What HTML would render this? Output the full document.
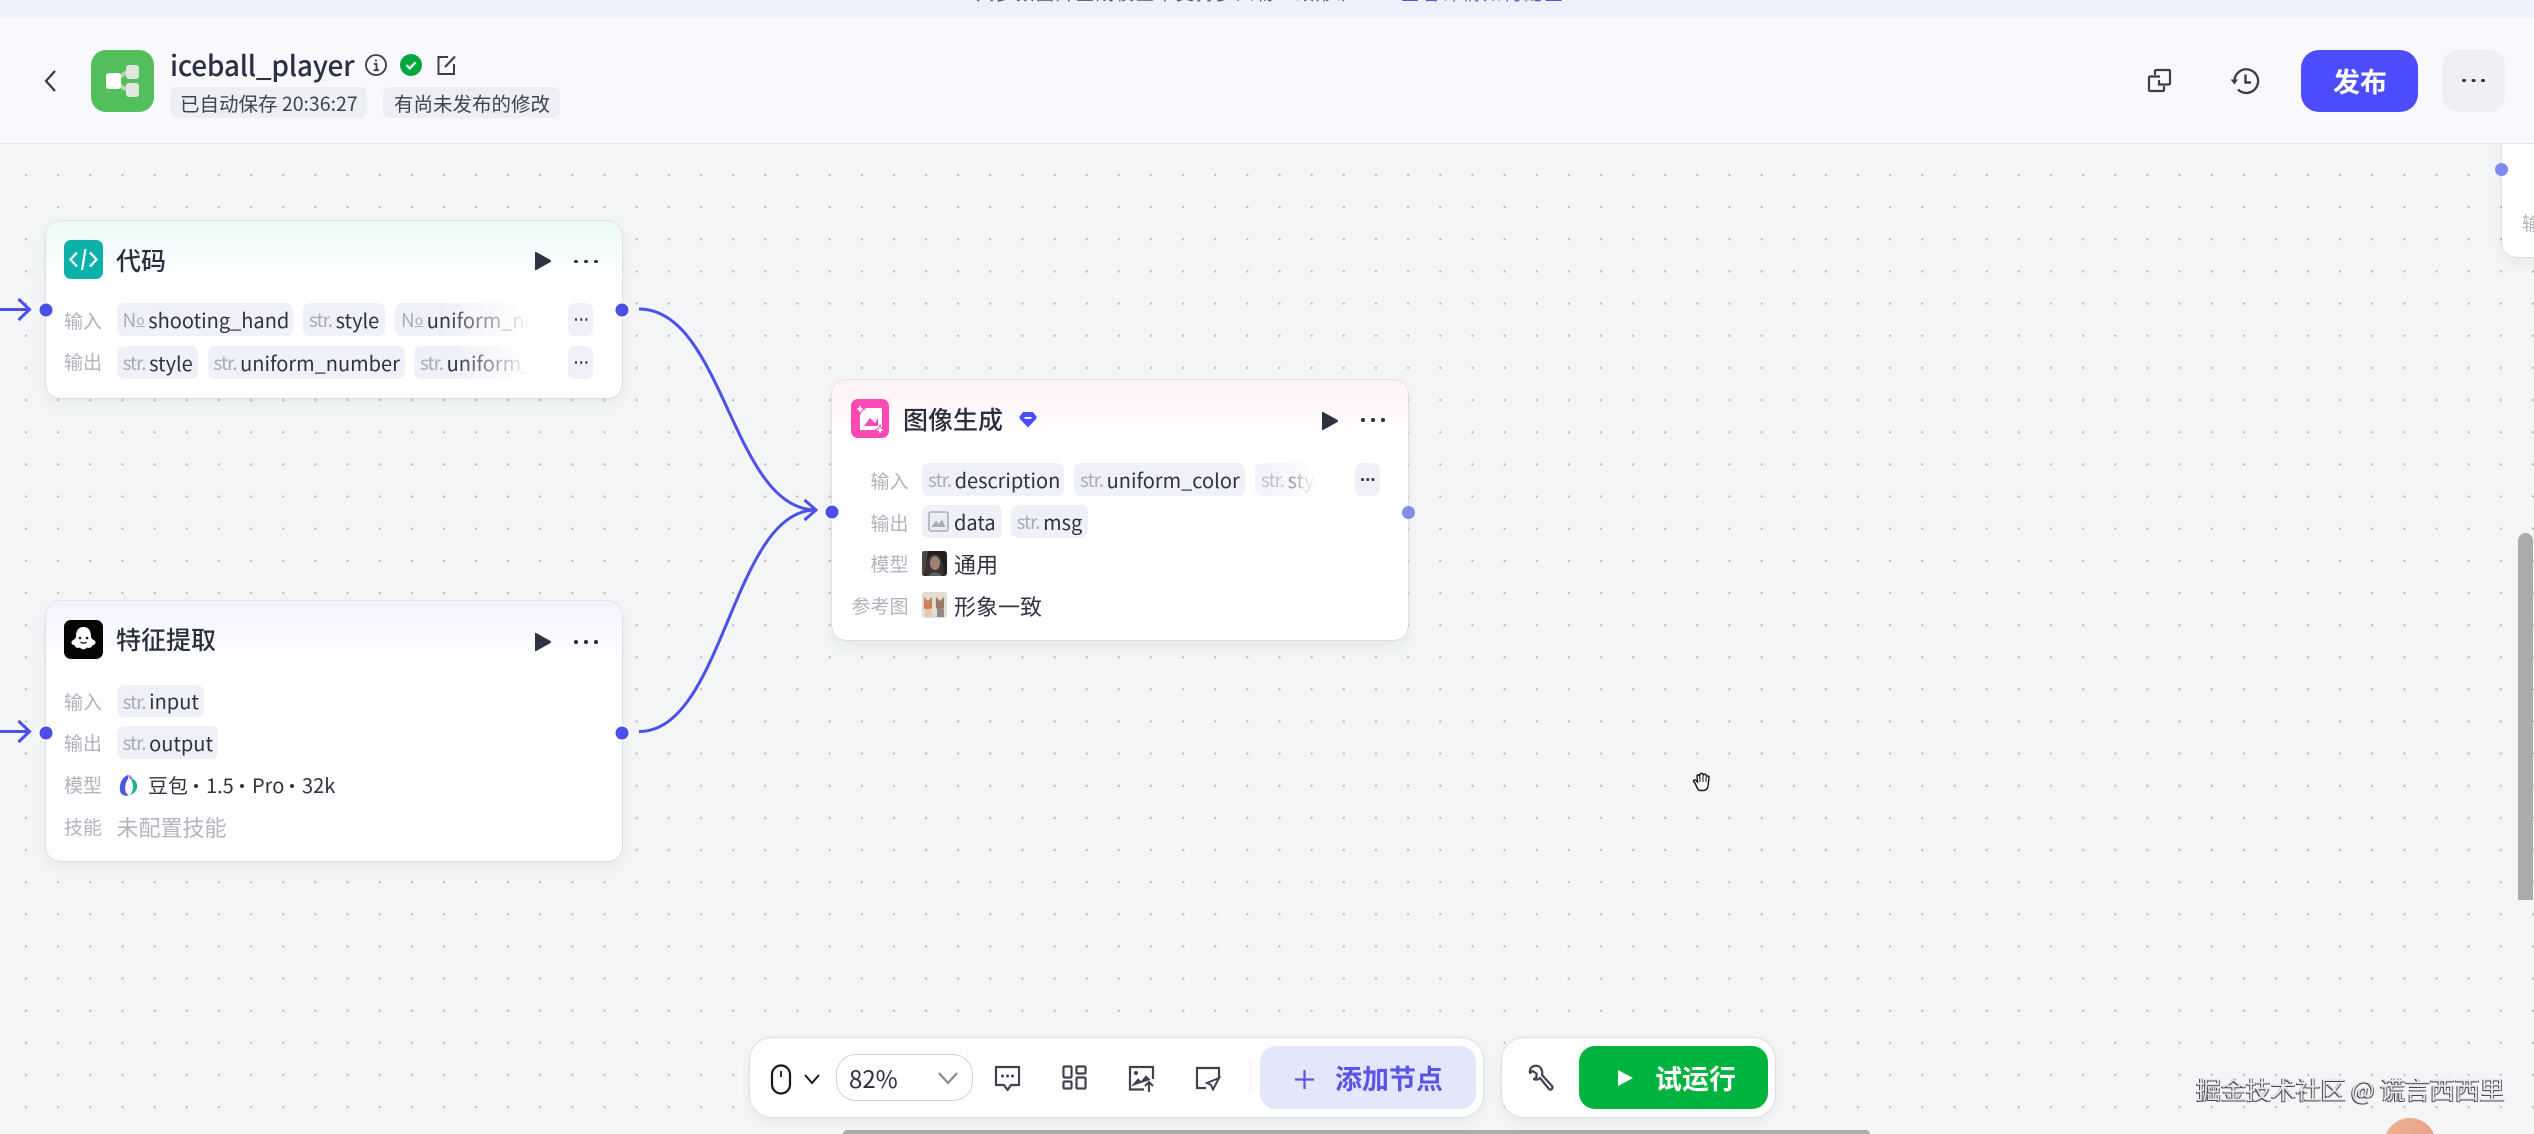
<!DOCTYPE html>
<html lang="zh"><head><meta charset="utf-8"><title>iceball_player</title>
<style>
*{box-sizing:border-box;margin:0;padding:0}
html,body{width:2534px;height:1134px;overflow:hidden;background:#f3f5f6}
body{position:relative;font-family:"Noto Sans CJK SC","Liberation Sans",sans-serif;color:#2b2e3c}
.a{position:absolute}
#bg{left:0;top:143px;width:2534px;height:991px;background-color:#f3f5f6;background-image:radial-gradient(circle at center,#b0b3ba 0,#b0b3ba .8px,transparent 1.3px);background-size:32.15px 32.15px;background-position:10px 16px}
#strip{left:0;top:0;width:2534px;height:18px;background:#eef0fd}
#head{left:0;top:18px;width:2534px;height:126px;background:#f9f9fd;border-bottom:1.5px solid #e2e3e8}
.t{position:absolute;white-space:nowrap;line-height:1}
.node{position:absolute;background:#fff;border-radius:14px;box-shadow:0 0 0 .5px rgba(190,193,204,.7),0 6px 14px rgba(40,45,70,.06);overflow:hidden}
.grad{position:absolute;left:0;top:0;width:100%;height:64px}
.lab{position:absolute;font-size:19px;line-height:1;color:#b0b3bd;white-space:nowrap}
.chip{position:absolute;height:33px;background:#f0f1f8;border-radius:7px;display:flex;align-items:center;padding-left:6px;font-size:20px;white-space:nowrap;overflow:hidden;color:#2f3240;line-height:1}
.chip i{font-style:normal;color:#a9acb9;font-size:19px;letter-spacing:-1px;margin-right:3.5px}
.chip i u{font-size:14px;text-decoration:underline;position:relative;top:-2px;letter-spacing:0;margin-left:1px}
.fade{-webkit-mask-image:linear-gradient(90deg,#000 35%,transparent 100%);mask-image:linear-gradient(90deg,#000 35%,transparent 100%)}
.more{position:absolute;height:33px;width:25px;background:#f0f1f8;border-radius:7px;font-size:0}
.more::before{content:"";position:absolute;left:6.5px;top:15px;width:2.6px;height:2.6px;border-radius:50%;background:#3a3d4a;box-shadow:5.2px 0 0 #3a3d4a,10.4px 0 0 #3a3d4a}
.port{position:absolute;width:13px;height:13px;border-radius:50%;background:#4c50e6;transform:translate(-6.5px,-6.5px);box-shadow:0 0 0 1.5px #fff}
.dots{position:absolute;width:3.6px;height:3.6px;border-radius:50%;background:#2f3240;box-shadow:10px 0 0 #2f3240,20px 0 0 #2f3240}
.md{position:absolute;width:4px;height:4px;border-radius:50%;background:#2f3240;top:784px}
.nt{position:absolute;white-space:nowrap;line-height:1;font-size:25px;color:#2b2e3c;font-weight:500}
</style></head><body>
<div id="bg" class="a"></div>

<!-- right partial node -->
<div class="node" style="left:2502px;top:120px;width:60px;height:137px;border-radius:0 0 0 14px">
<div class="lab" style="left:20px;top:93px">输</div></div>
<div class="a" style="left:2495px;top:163px;width:13px;height:13px;border-radius:50%;background:#8189ec"></div>

<div id="strip" class="a"></div>
<div class="t" style="left:976px;top:-16px;font-size:18px;width:368px;overflow:hidden;color:#55586a;letter-spacing:2px">大多数图片生成模型不支持多人物一致形象生成能力大多数图片</div>
<div class="t" style="left:1401px;top:-16px;font-size:18px;color:#5a55d8;letter-spacing:2.500px">查看详情如何配置</div>
<div id="head" class="a"></div>

<!-- header left -->
<svg class="a" style="left:40px;top:68px" width="22" height="26" viewBox="0 0 22 26"><path d="M15 3 L6 13 L15 23" fill="none" stroke="#33364a" stroke-width="2.2"/></svg>
<div class="a" style="left:91px;top:50px;width:63px;height:62px;border-radius:15px;background:#52bf5c"></div>
<svg class="a" style="left:91px;top:50px" width="63" height="62" viewBox="0 0 63 62"><path d="M28 27 L40 20 M28 35 L40 42" stroke="#b5d8b6" stroke-width="4"/><rect x="15" y="23" width="15" height="16" rx="3" fill="#fff"/><rect x="35" y="15" width="13" height="14" rx="3" fill="#dfe7df"/><rect x="35" y="33" width="13" height="14" rx="3" fill="#dfe7df"/></svg>
<div class="t" style="left:170px;top:51px;font-size:28px;letter-spacing:-.25px;color:#2c2f45;font-weight:500">iceball_player</div>
<svg class="a" style="left:364px;top:53px" width="24" height="24" viewBox="0 0 24 24"><circle cx="12" cy="12" r="10" fill="none" stroke="#3a3d4a" stroke-width="1.8"/><path d="M12 6.5v2M9.8 11H12.5V17M9.6 17.2H15" fill="none" stroke="#3a3d4a" stroke-width="1.8"/></svg>
<svg class="a" style="left:400px;top:54px" width="22" height="22" viewBox="0 0 22 22"><circle cx="11" cy="11" r="11" fill="#00a73e"/><path d="M6.5 11.2 L9.8 14.4 L15.5 8.4" fill="none" stroke="#fff" stroke-width="2.2"/></svg>
<svg class="a" style="left:436px;top:54px" width="22" height="22" viewBox="0 0 22 22"><path d="M12 3H2.5V20H18V10" fill="none" stroke="#3a3d4a" stroke-width="2"/><path d="M9 13 L19 2.5" fill="none" stroke="#3a3d4a" stroke-width="2"/></svg>
<div class="a" style="left:170px;top:87px;width:197px;height:31px;border-radius:7px;background:#eeeff5"></div>
<div class="t" style="left:180px;top:93px;font-size:19.5px;color:#3f4250">已自动保存 20:36:27</div>
<div class="a" style="left:383px;top:87px;width:177px;height:31px;border-radius:7px;background:#eeeff5"></div>
<div class="t" style="left:394px;top:93px;font-size:19.5px;color:#3f4250">有尚未发布的修改</div>

<!-- header right -->
<svg class="a" style="left:2147px;top:68px" width="25" height="25" viewBox="0 0 25 25"><path d="M8 7V3.5Q8 2 9.5 2H21.5Q23 2 23 3.5V15Q23 16.500 21.500 16.500H12V12" fill="none" stroke="#3a3d4a" stroke-width="2.2"/><path d="M17 18V21.5Q17 23 15.500 23H3.500Q2 23 2 21.500V10Q2 8.500 3.500 8.500H13" fill="none" stroke="#3a3d4a" stroke-width="2.2"/></svg>
<svg class="a" style="left:2230px;top:66px" width="30" height="30" viewBox="0 0 30 30"><path d="M4.500 15A11.800 11.800 0 1 1 8 23.500" fill="none" stroke="#3a3d4a" stroke-width="2.300"/><path d="M0.500 13.500H8L4.500 18.500Z" fill="#3a3d4a"/><path d="M15.500 8.500V16.500H21" fill="none" stroke="#3a3d4a" stroke-width="2.400"/></svg>
<div class="a" style="left:2301px;top:50px;width:117px;height:62px;border-radius:18px;background:#4d4dff"></div>
<div class="t" style="left:2333px;top:67px;font-size:27px;color:#fff;font-weight:700">发布</div>
<div class="a" style="left:2442px;top:50px;width:63px;height:62px;border-radius:16px;background:#eef0f5"></div>
<div class="dots" style="left:2462px;top:78.500px;width:3.500px;height:3.500px;box-shadow:9.500px 0 0 #2f3240,19px 0 0 #2f3240"></div>

<!-- wires -->
<svg class="a" style="left:0;top:0" width="2534" height="1134" viewBox="0 0 2534 1134">
<path d="M639 309 C 724 309, 732 510, 816 510" fill="none" stroke="#4c50e6" stroke-width="3"/>
<path d="M639 731.500 C 724 731.500, 732 510, 816 510" fill="none" stroke="#4c50e6" stroke-width="3"/>
<path d="M804.500 500 L816 510 L804.500 520" fill="none" stroke="#4c50e6" stroke-width="3"/>
<path d="M0 309.500H29M18.500 299 L29.500 309.500 L18.500 320" fill="none" stroke="#4c50e6" stroke-width="3"/>
<path d="M0 731.500H29M18.500 721 L29.500 731.500 L18.500 742" fill="none" stroke="#4c50e6" stroke-width="3"/>
</svg>

<!-- code node -->
<div class="node" style="left:45.500px;top:221px;width:576.500px;height:177px">
<div class="grad" style="background:linear-gradient(180deg,#ebfaf7,#fff)"></div>
</div>
<div class="a" style="left:64px;top:240px;width:39px;height:39px;border-radius:7px;background:#0cb2a9"></div>
<svg class="a" style="left:64px;top:240px" width="39" height="39" viewBox="0 0 39 39"><path d="M13 12.500 L6.500 19.500 L13 26.500M26 12.500 L32.500 19.500 L26 26.500M21.500 9 L18 30" fill="none" stroke="#fff" stroke-width="2.200"/></svg>
<div class="nt" style="left:116px;top:248px">代码</div>
<svg class="a" style="left:534px;top:251px" width="18" height="20" viewBox="0 0 18 20"><path d="M1 1.500 Q1 .5 2.200 1 L16.500 9 Q17.500 10 16.500 11 L2.200 19 Q1 19.500 1 18.500Z" fill="#2f3240"/></svg>
<div class="dots" style="left:574px;top:259.500px"></div>

<div class="lab" style="left:64px;top:311px">输入</div>
<div class="chip" style="left:116.500px;top:303px;width:176px"><i>N<u>o</u></i>shooting_hand</div>
<div class="chip" style="left:303px;top:303px;width:82px"><i>str.</i>style</div>
<div class="chip fade" style="left:395px;top:303px;width:135px"><i>N<u>o</u></i>uniform_number</div>
<div class="more" style="left:568px;top:303px"></div>
<div class="lab" style="left:64px;top:352px">输出</div>
<div class="chip" style="left:116.500px;top:346px;width:81px"><i>str.</i>style</div>
<div class="chip" style="left:207.500px;top:346px;width:197px"><i>str.</i>uniform_number</div>
<div class="chip fade" style="left:414px;top:346px;width:116px"><i>str.</i>uniform_color</div>
<div class="more" style="left:568px;top:346px"></div>
<div class="port" style="left:45.500px;top:310px"></div>
<div class="port" style="left:621.500px;top:310px"></div>

<!-- feature node -->
<div class="node" style="left:45.500px;top:601px;width:576.500px;height:260px">
<div class="grad" style="background:linear-gradient(180deg,#f3f4fe,#fff)"></div>
</div>
<div class="a" style="left:64px;top:620px;width:39px;height:39px;border-radius:7px;background:#050505"></div>
<svg class="a" style="left:64px;top:620px" width="39" height="39" viewBox="0 0 39 39"><path d="M19.500 7C13.500 7 12 12 12 16.500C12 18 11 19 8.500 20.500C6.500 22 7.500 25 10.500 25C11 28.500 15 28 16 27.500C18 30 21 30 23 27.500C24 28 28 28.500 28.500 25C31.500 25 32.500 22 30.500 20.500C28 19 27 18 27 16.500C27 12 25.500 7 19.500 7Z" fill="#fff"/><circle cx="16" cy="18" r="1.300" fill="#111"/><circle cx="23" cy="18" r="1.300" fill="#111"/><path d="M16.500 22Q19.500 24.500 22.500 22" fill="none" stroke="#111" stroke-width="1.300"/></svg>
<div class="nt" style="left:116px;top:627px">特征提取</div>
<svg class="a" style="left:534px;top:632px" width="18" height="20" viewBox="0 0 18 20"><path d="M1 1.500 Q1 .5 2.200 1 L16.500 9 Q17.500 10 16.500 11 L2.200 19 Q1 19.500 1 18.500Z" fill="#2f3240"/></svg>
<div class="dots" style="left:574px;top:640px"></div>
<div class="lab" style="left:64px;top:692px">输入</div>
<div class="chip" style="left:116.500px;top:685px;width:87px;height:32px"><i>str.</i>input</div>
<div class="lab" style="left:64px;top:733px">输出</div>
<div class="chip" style="left:116.500px;top:726px;width:101px"><i>str.</i>output</div>
<div class="lab" style="left:64px;top:775px">模型</div>
<svg class="a" style="left:119px;top:774px" width="20" height="23" viewBox="0 0 20 23"><path d="M9 1C3 3 0 10 1 17C2 21 7 23 10 21C5 20 5 10 9 5Z" fill="#4a5ae0"/><path d="M11 4C16 5 19 9 18 14C17 18 14 20 11 21C15 17 15 9 11 4Z" fill="#22b08a"/><path d="M9 1C11 1 13 2 14 5L10 5Z" fill="#a58cf0"/></svg>
<div class="t" style="left:148px;top:775px;font-size:20px;color:#2f3240">豆包</div>
<div class="md" style="left:194px"></div>
<div class="t" style="left:206px;top:775px;font-size:20px;color:#2f3240">1.5</div>
<div class="md" style="left:240px"></div>
<div class="t" style="left:252px;top:775px;font-size:20px;color:#2f3240">Pro</div>
<div class="md" style="left:290px"></div>
<div class="t" style="left:302px;top:775px;font-size:20px;color:#2f3240">32k</div>
<div class="lab" style="left:64px;top:817px">技能</div>
<div class="t" style="left:116.500px;top:816px;font-size:22px;color:#b3b5be">未配置技能</div>
<div class="port" style="left:45.500px;top:733px"></div>
<div class="port" style="left:621.500px;top:733px"></div>

<!-- image node -->
<div class="node" style="left:831.500px;top:380px;width:576.500px;height:260px">
<div class="grad" style="background:linear-gradient(180deg,#fff2f7,#fff)"></div>
</div>
<div class="a" style="left:851px;top:399px;width:38px;height:39px;border-radius:7px;background:#fb4ab4"></div>
<svg class="a" style="left:851px;top:399px" width="38" height="39" viewBox="0 0 38 39"><path d="M11 9H31V31H9V14" fill="#fff"/><path d="M13 27L19 19L24 24L27 19V27Z" fill="#fb4ab4"/><path d="M9 5L10.500 8.500L14 10L10.500 11.500L9 15L7.500 11.500L4 10L7.500 8.500ZM29 26L30.500 29.500L34 31L30.500 32.500L29 36L27.500 32.500L24 31L27.500 29.500Z" fill="#fff" stroke="#fb4ab4" stroke-width="1"/></svg>
<div class="nt" style="left:903px;top:407px">图像生成</div>
<svg class="a" style="left:1019px;top:411px" width="18" height="17" viewBox="0 0 18 17"><path d="M4 1H14L17.500 5.500V7.500L9 16.500L.5 7.500V5.500Z" fill="#4d4dff"/><rect x="5.500" y="6" width="7" height="1.800" fill="#fff"/></svg>
<svg class="a" style="left:1321px;top:411px" width="18" height="20" viewBox="0 0 18 20"><path d="M1 1.500 Q1 .5 2.200 1 L16.500 9 Q17.500 10 16.500 11 L2.200 19 Q1 19.500 1 18.500Z" fill="#2f3240"/></svg>
<div class="dots" style="left:1361px;top:418px"></div>
<div class="lab" style="left:870.500px;top:471px">输入</div>
<div class="chip" style="left:922px;top:463px;width:142px"><i>str.</i>description</div>
<div class="chip" style="left:1074px;top:463px;width:171px"><i>str.</i>uniform_color</div>
<div class="chip fade" style="left:1255px;top:463px;width:61px;opacity:.75"><i>str.</i>style</div>
<div class="more" style="left:1354.500px;top:463px"></div>
<div class="lab" style="left:870.500px;top:513px">输出</div>
<div class="chip" style="left:922px;top:505px;width:80px"><svg width="21" height="21" viewBox="0 0 21 21" style="margin-right:5px"><rect x="1" y="1" width="19" height="19" rx="2" fill="#eceef5" stroke="#a9acb9" stroke-width="1.600"/><path d="M3.500 16L8 9.500L11 13L14 8L17.500 16Z" fill="#a9acb9"/></svg>data</div>
<div class="chip" style="left:1010.500px;top:505px;width:77px"><i>str.</i>msg</div>
<div class="lab" style="left:870.500px;top:554px">模型</div>
<svg class="a" style="left:922px;top:551px" width="25" height="25" viewBox="0 0 25 25"><rect width="25" height="25" rx="3" fill="#22201f"/><path d="M4 25C3 14 6 3 13 3C20 3 22 14 21 25Z" fill="#3a3330"/><ellipse cx="13" cy="12" rx="5" ry="7" fill="#a08274"/><path d="M7 25C8 20 18 20 19 25Z" fill="#5a6266"/><path d="M0 0L6 0L3 22L0 25Z" fill="#6b5f5a" opacity=".6"/></svg>
<div class="t" style="left:954px;top:553px;font-size:22px;color:#2f3240">通用</div>
<div class="lab" style="left:851.500px;top:596px">参考图</div>
<svg class="a" style="left:922px;top:592px" width="25" height="26" viewBox="0 0 25 26"><rect width="25" height="26" rx="3" fill="#e2ddd4"/><path d="M2 5L6 9L10 5V16L6 19L2 16Z" fill="#c98258"/><path d="M14 5L18 9L22 5V16L18 19L14 16Z" fill="#9a7a63"/><rect x="3" y="17" width="7" height="8" fill="#e9c7ae"/><rect x="15" y="17" width="7" height="8" fill="#8e8a84"/></svg>
<div class="t" style="left:954px;top:595px;font-size:22px;color:#2f3240">形象一致</div>
<div class="port" style="left:831.500px;top:512px"></div>
<div class="a" style="left:1402px;top:506px;width:13px;height:13px;border-radius:50%;background:#7f90e6"></div>

<!-- hand cursor -->
<svg class="a" style="left:1692px;top:772px" width="22" height="20" viewBox="0 0 22 20"><path d="M3 11L1.500 9.500C1 8 3 7.500 4 8.500L5.500 10L5 4C5 2.500 7 2.500 7.500 4L8 2.500C8.500 1 10.500 1 11 2.500L11.500 3C12 1.500 14 2 14 3.500L15 4.500C15.500 3.500 17.500 4 17 6L16 14C15.500 17 14 18.500 11 18.500H8C5.500 18.500 4.500 14 3 11Z" fill="#fff" stroke="#111" stroke-width="1.400"/><path d="M8 5V10M11 4V10M14 5V10" stroke="#111" stroke-width="1"/></svg>

<!-- toolbar -->
<div class="a" style="left:750px;top:1038px;width:733px;height:79px;border-radius:22px;background:#fff;box-shadow:0 0 0 1px #dddfe5,0 4px 12px rgba(40,45,70,.06)"></div>
<svg class="a" style="left:770px;top:1064px" width="22" height="31" viewBox="0 0 22 31"><rect x="2" y="1.500" width="18" height="28" rx="9" fill="none" stroke="#15171f" stroke-width="2.200"/><path d="M11 7V13" stroke="#15171f" stroke-width="1.800"/></svg>
<svg class="a" style="left:803px;top:1072px" width="18" height="14" viewBox="0 0 18 14"><path d="M2 3L9 11L16 3" fill="none" stroke="#15171f" stroke-width="2"/></svg>
<div class="a" style="left:836px;top:1054px;width:137px;height:47px;border-radius:20px;border:1.500px solid #d0d1d6;background:#fff"></div>
<div class="t" style="left:849px;top:1066px;font-size:24px;color:#2b2e3c">82%</div>
<svg class="a" style="left:937px;top:1070px" width="22" height="16" viewBox="0 0 22 16"><path d="M2 3L11 13L20 3" fill="none" stroke="#8a8c92" stroke-width="2.200"/></svg>
<svg class="a" style="left:994px;top:1065px" width="27" height="27" viewBox="0 0 27 27"><path d="M2 2H25V20H17L13.500 25L10 20H2Z" fill="none" stroke="#3f4250" stroke-width="2.200" stroke-linejoin="round"/><circle cx="8.500" cy="11" r="1.500" fill="#3f4250"/><circle cx="13.500" cy="11" r="1.500" fill="#3f4250"/><circle cx="18.500" cy="11" r="1.500" fill="#3f4250"/></svg>
<svg class="a" style="left:1062px;top:1065px" width="25" height="25" viewBox="0 0 25 25"><g fill="none" stroke="#3f4250" stroke-width="2.200"><rect x="1.500" y="1.500" width="8" height="11" rx="1"/><rect x="14.500" y="1.500" width="9" height="7" rx="1"/><rect x="1.500" y="16.500" width="8" height="7" rx="1"/><rect x="14.500" y="12.500" width="9" height="11" rx="1"/></g></svg>
<svg class="a" style="left:1128px;top:1065px" width="28" height="28" viewBox="0 0 28 28"><path d="M16 24.500H2V2H25V14" fill="none" stroke="#3f4250" stroke-width="2.200"/><circle cx="8" cy="8" r="2" fill="#3f4250"/><path d="M4 21L10 14L13 17L18 11L22 15" fill="#3f4250" stroke="#3f4250"/><path d="M21 27V17M17 21L21 17L25 21" fill="none" stroke="#3f4250" stroke-width="2"/></svg>
<svg class="a" style="left:1195px;top:1066px" width="26" height="25" viewBox="0 0 26 25"><path d="M11 22H2V2H24V12" fill="none" stroke="#3f4250" stroke-width="2.200"/><path d="M24 12L12 17L16 19L18 23.500Z" fill="none" stroke="#3f4250" stroke-width="2"/></svg>
<div class="a" style="left:1250px;top:1060px;width:1px;height:32px;background:#eceef2"></div>
<div class="a" style="left:1260px;top:1046px;width:216px;height:63px;border-radius:16px;background:#e3e7fb"></div>
<svg class="a" style="left:1294px;top:1069px" width="21" height="21" viewBox="0 0 21 21"><path d="M10.500 1V20M1 10.500H20" stroke="#5a55e8" stroke-width="2.200"/></svg>
<div class="t" style="left:1335px;top:1064px;font-size:27px;color:#5a55e8;font-weight:700">添加节点</div>

<div class="a" style="left:1501.500px;top:1038px;width:273px;height:79px;border-radius:22px;background:#fff;box-shadow:0 0 0 1px #dddfe5,0 4px 12px rgba(40,45,70,.06)"></div>
<svg class="a" style="left:1527px;top:1064px" width="27" height="28" viewBox="0 0 27 28"><path d="M11 2C6 1 2 4 3 9L5.500 7L9.500 9.500V13.500L7 15C9.500 16.500 12 15 13 14L22 25C24 27 26.500 24 25 22L15 11C16 7 14 3 11 2Z" fill="none" stroke="#3f4250" stroke-width="2.200" stroke-linejoin="round"/></svg>
<div class="a" style="left:1579px;top:1046px;width:189px;height:63px;border-radius:16px;background:#00b33f"></div>
<svg class="a" style="left:1617px;top:1069px" width="18" height="18" viewBox="0 0 18 18"><path d="M1 1L16 9L1 17Z" fill="#fff"/></svg>
<div class="t" style="left:1655px;top:1064px;font-size:27px;color:#fff;font-weight:700">试运行</div>

<!-- watermark -->
<div class="t" style="left:2196px;top:1077px;font-size:25px;color:#e6e7ea;text-shadow:-1px 1px 0 #45474c,1px 1px 0 #6a6c70;letter-spacing:-.1px">掘金技术社区 @ 谎言西西里</div>
<div class="a" style="left:2384px;top:1118px;width:52px;height:52px;border-radius:50%;background:linear-gradient(120deg,#eeb28f,#e79c8c)"></div>

<!-- scrollbars -->
<div class="a" style="left:2518px;top:533px;width:15px;height:367px;border-radius:8px 8px 0 0;background:#ababab"></div>
<div class="a" style="left:843px;top:1130px;width:1027px;height:4px;border-radius:4px 4px 0 0;background:#ababab"></div>
</body></html>
